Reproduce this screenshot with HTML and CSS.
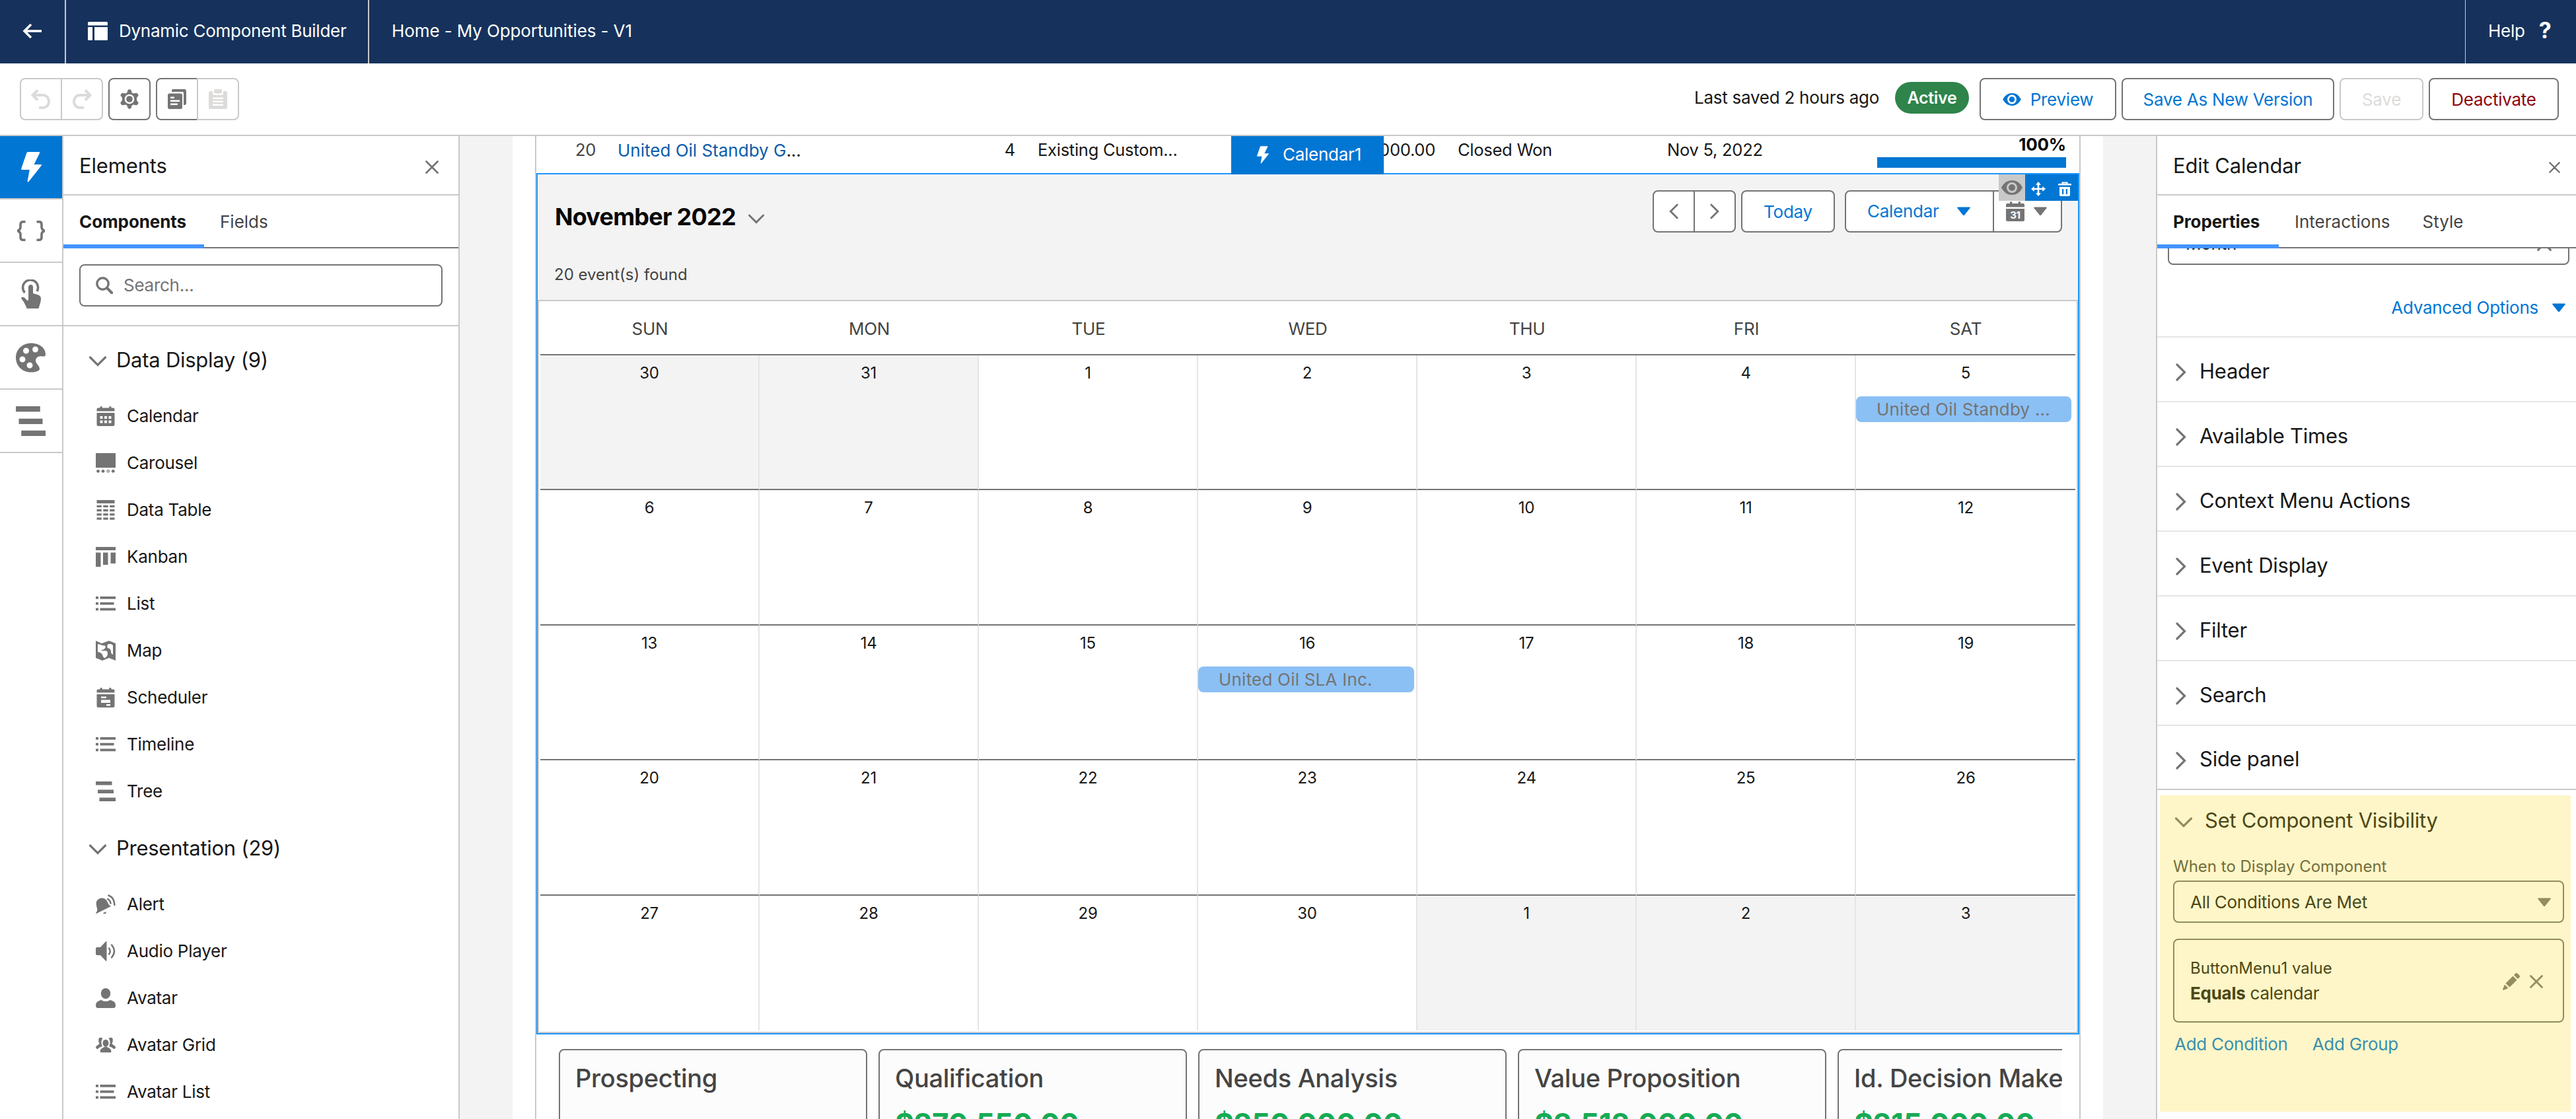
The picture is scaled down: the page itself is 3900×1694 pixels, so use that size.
FILE: index.html
```html
<!DOCTYPE html>
<html lang="en">
  <head>
    <meta charset="UTF-8" />
    <meta name="viewport" content="width=device-width, initial-scale=1.0" />
    <title>Dynamic Component Builder</title>
    <link rel="stylesheet" href="styles.css">
  </head>
  <body>
    <!-- icon sprite -->
    <svg class="sprite" xmlns="http://www.w3.org/2000/svg">
      <symbol id="i-back" viewBox="0 0 30 24"><path d="M14 2 4 12l10 10M4 12h26" fill="none" stroke="currentColor" stroke-width="3.6"/></symbol>
      <symbol id="i-layout" viewBox="0 0 30 28"><path d="M1.500 0h27a1.500 1.500 0 0 1 1.500 1.500V5.500H0v-4A1.500 1.500 0 0 1 1.500 0zM0 8h7v20H1.500A1.500 1.500 0 0 1 0 26.500zM10 8h20v18.500a1.500 1.500 0 0 1-1.500 1.500H10z"/></symbol>
      <symbol id="i-undo" viewBox="0 0 30 30"><path d="M10 1.500 2.500 9l7.500 7.500M3 9h15a9 9 0 0 1 9 9.500 9 9 0 0 1-9 9.500h-6" fill="none" stroke="currentColor" stroke-width="4"/></symbol>
      <symbol id="i-redo" viewBox="0 0 30 30"><path d="M20 1.500 27.500 9l-7.500 7.500M27 9H12a9 9 0 0 0-9 9.500A9 9 0 0 0 12 28h6" fill="none" stroke="currentColor" stroke-width="4"/></symbol>
      <symbol id="i-gear" viewBox="0 0 28 30"><path fill-rule="evenodd" d="M11.500 1.500Q14-1 16.500 1.500l1.300 4 2 1.100 4.200-.9q3 .3 3.600 4.100L25 13v4l2.600 3.200q-.6 3.800-3.600 4.100l-4.200-.9-2 1.100-1.300 4Q14 31 11.500 28.500l-1.300-4-2-1.100-4.200.9Q1 24 .4 20.200L3 17v-4L.4 9.800Q1 6 4 5.700l4.200.9 2-1.100zM14 7.700a7.300 7.300 0 1 0 0 14.600 7.300 7.300 0 0 0 0-14.600z"/><circle cx="14" cy="15" r="4.800"/></symbol>
      <symbol id="i-copy" viewBox="0 0 28 30"><path d="M8 0h17a3 3 0 0 1 3 3v18a3 3 0 0 1-3 3h-1V6a2 2 0 0 0-2-2H6V2a2 2 0 0 1 2-2z"/><path fill-rule="evenodd" d="M2.500 6.500h17A2.500 2.500 0 0 1 22 9v18.500a2.500 2.500 0 0 1-2.500 2.500h-17A2.500 2.500 0 0 1 0 27.500V9a2.500 2.500 0 0 1 2.500-2.500zM4 11.500V14h6v-2.500zM4 16.500V19h14v-2.500zM4 21.500V24h11v-2.500z"/></symbol>
      <symbol id="i-paste" viewBox="0 0 28 30"><rect x="8" y="0" width="12" height="6.500" rx="2"/><path fill-rule="evenodd" d="M2.500 3H6v3q0 3 3 3h10q3 0 3-3V3h3.500A2.500 2.500 0 0 1 28 5.500v22a2.500 2.500 0 0 1-2.500 2.500h-23A2.500 2.500 0 0 1 0 27.500v-22A2.500 2.500 0 0 1 2.500 3zM6 12.500V15h16v-2.500zM6 17.500V20h16v-2.500zM6 22.500V25h16v-2.500z"/></symbol>
      <symbol id="i-eye" viewBox="0 0 32 22"><path fill-rule="evenodd" d="M.5 10Q6 0 16 0t15.500 10q.7 1 0 2Q26 22 16 22T.5 12q-.7-1 0-2zM16 3a8 8 0 1 0 0 16 8 8 0 0 0 0-16z"/><circle cx="16" cy="11" r="5"/></symbol>
      <symbol id="i-bolt" viewBox="0 0 31 46"><path d="M10 0h17.500l.8 1.300L19.500 19h11l.5 1.300L11 45.500l-1.500-.5 3.300-18H.7L0 25.700 8.500 1z"/></symbol>
      <symbol id="i-braces" viewBox="0 0 42 31"><path d="M12.500 1.700H9q-4 0-4 4v4q0 4-4.500 5.800Q5 17 5 21v4.300q0 4 4 4h3.500M29.500 1.700H33q4 0 4 4v4q0 4 4.500 5.800Q37 17 37 21v4.300q0 4-4 4h-3.500" fill="none" stroke="currentColor" stroke-width="3.600"/></symbol>
      <symbol id="i-touch" viewBox="0 0 30 44"><path d="M5.500 20A11.500 11.500 0 1 1 24 18" fill="none" stroke="currentColor" stroke-width="3.500"/><path d="M11 11.500a3.500 3.500 0 0 1 7 0V21l8 2.500q4 1.500 4 5.500 0 4-1.500 8l-2 7H8.500L7 40Q5 35 1 30q-1.500-2 0-3 3-1 5.500 2 1.500 2 3 3 1.500 0 1.500-2z"/></symbol>
      <symbol id="i-palette" viewBox="0 0 45 44"><path fill-rule="evenodd" d="M23 0C10 0 0 9.500 0 22s10 22 22.500 22c3.500 0 9-.5 12-2.500 2.500-2 1.500-4.500-.5-7.500-3-4-5.500-7-3-11 1.500-3 5-3.500 9-3 3.500.5 5-.5 5-3C45 6 34 0 23 0zM15.500 7a4.500 4.500 0 1 0 0 9 4.500 4.500 0 0 0 0-9zm14-2a4.500 4.500 0 1 0 0 9 4.500 4.500 0 0 0 0-9zM10 20a4.500 4.500 0 1 0 0 9 4.500 4.500 0 0 0 0-9zm11 9a4.500 4.500 0 1 0 0 9 4.500 4.500 0 0 0 0-9z"/></symbol>
      <symbol id="i-tree" viewBox="0 0 30 30"><path d="M0 0h24.500v5.500H0zM3 12.500h24V18H3zM5.500 24.500H30V30H5.500z"/></symbol>
      <symbol id="i-search" viewBox="0 0 26 26"><circle cx="10.500" cy="10.500" r="8.700" fill="none" stroke="currentColor" stroke-width="3.400"/><path d="m17 17 7.500 7.500" stroke="currentColor" stroke-width="4" stroke-linecap="round"/></symbol>
      <symbol id="i-close" viewBox="0 0 20 20"><path d="m1.500 1.500 17 17m0-17-17 17" fill="none" stroke="currentColor" stroke-width="2.800" stroke-linecap="round"/></symbol>
      <symbol id="i-down" viewBox="0 0 26 16"><path d="m1.500 2 11.500 11.500L24.500 2" fill="none" stroke="currentColor" stroke-width="3.200" stroke-linecap="round"/></symbol>
      <symbol id="i-right" viewBox="0 0 16 26"><path d="m2 1.500 11.500 11.500L2 24.500" fill="none" stroke="currentColor" stroke-width="3.200" stroke-linecap="round"/></symbol>
      <symbol id="i-tri" viewBox="0 0 20 13"><path d="M1 0h18l1 1-9.200 11.500h-1.600L0 1z"/></symbol>
      <symbol id="i-calendar" viewBox="0 0 30 30"><path d="M3.500 2.500h3V1q1.700-2 3.300 0v1.500h10.400V1q1.700-2 3.300 0v1.500h3q2 0 2 2v3h-27v-3q0-2 2-2z"/><path fill-rule="evenodd" d="M1.500 10h27v17.500a2.500 2.500 0 0 1-2.500 2.500H4a2.500 2.500 0 0 1-2.500-2.500zM6.500 15v4h4v-4zm6.500 0v4h4v-4zm6.500 0v4h4v-4zm-13 6.500v4h4v-4zm6.500 0v4h4v-4zm6.500 0v4h4v-4z"/></symbol>
      <symbol id="i-carousel" viewBox="0 0 30 30"><path d="M0 0h30v22H0z"/><circle cx="3.500" cy="27.300" r="2.400"/><circle cx="11" cy="27.300" r="2.400"/><circle cx="18.700" cy="27.300" r="1.700" fill="none" stroke="currentColor" stroke-width="1.200"/><circle cx="26.300" cy="27.300" r="2.400"/></symbol>
      <symbol id="i-table" viewBox="0 0 30 30"><path d="M1.500 0h27v5h-27zM1.500 8h7.300v3H1.500zM11.300 8h7.400v3h-7.400zM21.200 8h7.300v3h-7.300zM1.500 14h7.300v3.300H1.500zM11.300 14h7.400v3.300h-7.400zM21.200 14h7.300v3.300h-7.300zM1.500 20.300h7.300v3.200H1.500zM11.300 20.300h7.400v3.200h-7.400zM21.200 20.300h7.300v3.200h-7.300zM1.500 26.500h7.300v3.200H1.500zM11.300 26.500h7.400v3.200h-7.400zM21.200 26.500h7.300v3.200h-7.300z"/></symbol>
      <symbol id="i-kanban" viewBox="0 0 30 30"><path d="M0 0h30v5H0zM0 8.500h7.500V30H0zM11 8.500h7.500V27H11zM22.500 8.500H30V25h-7.500z"/></symbol>
      <symbol id="i-list" viewBox="0 0 30 30"><path d="M0 4h4v3.800H0zM6.500 4H30v3.800H6.500zM0 12.700h4v3.800H0zM6.500 12.700h21v3.800h-21zM0 21.500h4v3.800H0zM6.500 21.500H30v3.800H6.500z"/></symbol>
      <symbol id="i-map" viewBox="0 0 30 30"><path fill-rule="evenodd" d="M0 0l9 4 11-4 10 4v26l-10-4-10 4-10-4zM3 5v12q4 0 7 4 1 5 4 5 4-2 4-7 0-4-4-4-4 1-6-1 5 0 6-3 2-2-1-4-3 1-5-1zM19 5q4-1 7 2v14q-3-1-3-5 0-4-5-5-2-4 1-6z"/></symbol>
      <symbol id="i-scheduler" viewBox="0 0 30 30"><path d="M3.500 2.500h3V1q1.700-2 3.300 0v1.500h10.400V1q1.700-2 3.300 0v1.500h3q2 0 2 2v3h-27v-3q0-2 2-2z"/><path fill-rule="evenodd" d="M1.500 10h27v17.500a2.500 2.500 0 0 1-2.500 2.500H4a2.500 2.500 0 0 1-2.500-2.500zM8 13.500V16h8v-2.500zm0 5V23h14v-4.500zm8 6.500v2.500h6V25z"/></symbol>
      <symbol id="i-alert" viewBox="0 0 30 30"><path d="M1 11Q3 6 9 5.500q6 0 8.500 5.500 2.500 6.500 5.500 6.500-.5 1-3 2L2 28.500q-2.500 1-2 0Q3 25 2 21 0 15 1 11zM11 28l5-2q0 3-2 3.500-2 .5-3-1.500z"/><path d="M18 7q4 2 4.500 6.500M19.500 1.500Q28 5 28.500 16" fill="none" stroke="currentColor" stroke-width="2.500" stroke-linecap="round"/></symbol>
      <symbol id="i-audio" viewBox="0 0 30 30"><path d="M2 9h5L15 .5q1.500-1 1.500.5v28q0 1.500-1.500.5L7 21H2q-2 0-2-2v-8q0-2 2-2z"/><path d="M20 10.500q3.500 4.500 0 9M24 5.500q8 9.500 0 19" fill="none" stroke="currentColor" stroke-width="2.400" stroke-linecap="round"/></symbol>
      <symbol id="i-avatar" viewBox="0 0 30 30"><ellipse cx="15" cy="8" rx="7.200" ry="8"/><path d="M0 26q0-5 4-6.500l4-1.800q3.500 2.300 7 2.300t7-2.300l4 1.800Q30 21 30 26q0 4-3 4H3q-3 0-3-4z"/></symbol>
      <symbol id="i-group" viewBox="0 0 32 30"><ellipse cx="16" cy="12" rx="4.800" ry="5.800"/><path d="M7 25q0-3 2.500-4.500L14 18h4l4.500 2.500Q25 22 25 25t-2 2H9q-2 0-2-2zM4.500 6Q5 2 9 3.300l2.500.7Q8.500 7 9 12q.5 3 1.500 5L6 19l-3 2.500q-3-.5-3-3 0-1.500 2.500-3L6 13Q4 10 4.500 6zM27.500 6Q27 2 23 3.300L20.500 4q3 3 2.500 8-.5 3-1.500 5l4.500 2 3 2.500q3-.5 3-3 0-1.500-2.500-3L26 13q2-3 1.500-7z"/></symbol>
      <symbol id="i-event" viewBox="0 0 28 30"><path d="M2 3h4V1q1.700-2 3.300 0v2h9.400V1q1.700-2 3.300 0v2h4q2 0 2 2v3.500H0V5q0-2 2-2zM0 11h28v16.500a2.500 2.500 0 0 1-2.500 2.500h-23A2.500 2.500 0 0 1 0 27.500z"/></symbol>
      <symbol id="i-move" viewBox="0 0 22 22"><path d="M11 3v16M3 11h16" stroke="currentColor" stroke-width="2.600"/><path d="m11 0 4 4.700H7zM11 22l4-4.700H7zM0 11l4.700-4v8zM22 11l-4.700-4v8z"/></symbol>
      <symbol id="i-trash" viewBox="0 0 20 22"><path d="M6.500 3V1.500h7V3" fill="none" stroke="currentColor" stroke-width="2"/><path fill-rule="evenodd" d="M1 3h18q1 0 1 1v1.500H0V4q0-1 1-1zM2 8h16v12a2 2 0 0 1-2 2H4a2 2 0 0 1-2-2zM6 11v8h2.200v-8zm5.800 0v8H14v-8z"/></symbol>
      <symbol id="i-edit" viewBox="0 0 26 26"><path d="m4.500 15.500 6 6L21.500 10.500l-6-6zM17 3l6 6 2.200-2.200q1.600-1.700 0-3.200L22.400.800q-1.600-1.500-3.200 0zM3 17.500l5.500 5.500-7 2.800q-1.500.5-1.300-1.300z"/></symbol>
    </svg>

    <header class="topbar">
      <a class="topbar-back"><svg class="icon-back"><use href="#i-back"/></svg></a>
      <div class="topbar-app"><svg class="icon-layout"><use href="#i-layout"/></svg><span>Dynamic Component Builder</span></div>
      <div class="topbar-title">Home - My Opportunities - V1</div>
      <div class="topbar-help">Help <b>?</b></div>
    </header>

    <div class="toolbar">
      <div class="btn-group">
        <button class="icon-btn disabled"><svg class="icon-30"><use href="#i-undo"/></svg></button>
        <button class="icon-btn disabled"><svg class="icon-30"><use href="#i-redo"/></svg></button>
      </div>
      <div class="btn-group">
        <button class="icon-btn single"><svg class="icon-tool"><use href="#i-gear"/></svg></button>
      </div>
      <div class="btn-group">
        <button class="icon-btn"><svg class="icon-tool"><use href="#i-copy"/></svg></button>
        <button class="icon-btn disabled"><svg class="icon-tool"><use href="#i-paste"/></svg></button>
      </div>
      <div class="toolbar-actions">
        <span class="saved">Last saved 2 hours ago</span>
        <span class="badge">Active</span>
        <button class="btn btn-preview"><svg class="icon-preview"><use href="#i-eye"/></svg>Preview</button>
        <button class="btn btn-version">Save As New Version</button>
        <button class="btn btn-save">Save</button>
        <button class="btn btn-deactivate">Deactivate</button>
      </div>
    </div>

    <div class="workspace">
      <nav class="rail">
        <a class="rail-item active"><svg class="icon-bolt"><use href="#i-bolt"/></svg></a>
        <a class="rail-item"><svg class="icon-braces"><use href="#i-braces"/></svg></a>
        <a class="rail-item"><svg class="icon-touch"><use href="#i-touch"/></svg></a>
        <a class="rail-item"><svg class="icon-palette"><use href="#i-palette"/></svg></a>
        <a class="rail-item"><svg class="icon-palette"><use href="#i-tree"/></svg></a>
      </nav>

      <aside class="elements">
        <div class="panel-head"><h2>Elements</h2><svg class="icon-20"><use href="#i-close"/></svg></div>
        <div class="tabs">
          <span class="tab selected">Components</span>
          <span class="tab">Fields</span>
        </div>
        <div class="search-wrap">
          <div class="search"><svg class="icon-search"><use href="#i-search"/></svg><span>Search...</span></div>
        </div>
        <h3 class="group-title"><svg class="icon-down"><use href="#i-down"/></svg>Data Display (9)</h3>
        <ul class="element-list">
          <li><svg class="icon-30"><use href="#i-calendar"/></svg>Calendar</li>
          <li><svg class="icon-30"><use href="#i-carousel"/></svg>Carousel</li>
          <li><svg class="icon-30"><use href="#i-table"/></svg>Data Table</li>
          <li><svg class="icon-30"><use href="#i-kanban"/></svg>Kanban</li>
          <li><svg class="icon-30"><use href="#i-list"/></svg>List</li>
          <li><svg class="icon-30"><use href="#i-map"/></svg>Map</li>
          <li><svg class="icon-30"><use href="#i-scheduler"/></svg>Scheduler</li>
          <li><svg class="icon-30"><use href="#i-list"/></svg>Timeline</li>
          <li><svg class="icon-30"><use href="#i-tree"/></svg>Tree</li>
        </ul>
        <h3 class="group-title"><svg class="icon-down"><use href="#i-down"/></svg>Presentation (29)</h3>
        <ul class="element-list">
          <li><svg class="icon-30"><use href="#i-alert"/></svg>Alert</li>
          <li><svg class="icon-30"><use href="#i-audio"/></svg>Audio Player</li>
          <li><svg class="icon-30"><use href="#i-avatar"/></svg>Avatar</li>
          <li><svg class="icon-30"><use href="#i-group"/></svg>Avatar Grid</li>
          <li><svg class="icon-30"><use href="#i-list"/></svg>Avatar List</li>
        </ul>
      </aside>

      <main class="canvas">
        <div class="page">
          <div class="content">
            <div class="opp-row">
              <span class="opp-index">20</span>
              <span class="opp-name"><a>United Oil Standby G</a>...</span>
              <span class="right">4</span>
              <span class="opp-type">Existing Custom...</span>
              <span class="right">$120,000.00</span>
              <span class="opp-stage">Closed Won</span>
              <span>Nov 5, 2022</span>
              <div class="progress"><b>100%</b><div class="progress-bar"></div></div>
            </div>

            <section class="calendar">
              <div class="component-tag"><svg class="icon-tag"><use href="#i-bolt"/></svg>Calendar1</div>
              <div class="component-tools">
                <span class="tool-eye"><svg class="icon-preview"><use href="#i-eye"/></svg></span>
                <span><svg class="icon-move"><use href="#i-move"/></svg></span>
                <span><svg class="icon-trash"><use href="#i-trash"/></svg></span>
              </div>
              <div class="cal-head">
                <div class="cal-bar">
                  <h1>November 2022<svg class="icon-month"><use href="#i-down"/></svg></h1>
                  <div class="cal-actions">
                    <div class="cal-group">
                      <button class="nav-btn"><svg class="icon-prev"><use href="#i-right"/></svg></button>
                      <button class="nav-btn"><svg class="icon-next"><use href="#i-right"/></svg></button>
                    </div>
                    <button class="btn btn-today">Today</button>
                    <div class="cal-group">
                      <button class="view-btn">Calendar<svg class="icon-tri"><use href="#i-tri"/></svg></button>
                      <button class="range-btn"><span class="event-icon"><svg class="icon-tool"><use href="#i-event"/></svg><b>31</b></span><svg class="icon-tri"><use href="#i-tri"/></svg></button>
                    </div>
                  </div>
                </div>
                <p>20 event(s) found</p>
              </div>
              <div class="cal-body">
                <div class="weekdays">
                  <span>SUN</span><span>MON</span><span>TUE</span><span>WED</span><span>THU</span><span>FRI</span><span>SAT</span>
                </div>
                <div class="weeks">
                  <div class="day out">30</div>
                  <div class="day out">31</div>
                  <div class="day">1</div>
                  <div class="day">2</div>
                  <div class="day">3</div>
                  <div class="day">4</div>
                  <div class="day">5<span class="event">United Oil Standby ...</span></div>
                  <div class="day">6</div>
                  <div class="day">7</div>
                  <div class="day">8</div>
                  <div class="day">9</div>
                  <div class="day">10</div>
                  <div class="day">11</div>
                  <div class="day">12</div>
                  <div class="day">13</div>
                  <div class="day">14</div>
                  <div class="day">15</div>
                  <div class="day">16<span class="event">United Oil SLA Inc.</span></div>
                  <div class="day">17</div>
                  <div class="day">18</div>
                  <div class="day">19</div>
                  <div class="day">20</div>
                  <div class="day">21</div>
                  <div class="day">22</div>
                  <div class="day">23</div>
                  <div class="day">24</div>
                  <div class="day">25</div>
                  <div class="day">26</div>
                  <div class="day">27</div>
                  <div class="day">28</div>
                  <div class="day">29</div>
                  <div class="day">30</div>
                  <div class="day out">1</div>
                  <div class="day out">2</div>
                  <div class="day out">3</div>
                </div>
              </div>
            </section>

            <section class="stages">
              <div class="stage"><h4>Prospecting</h4></div>
              <div class="stage"><h4>Qualification</h4><strong>$270,550.00</strong></div>
              <div class="stage"><h4>Needs Analysis</h4><strong>$250,000.00</strong></div>
              <div class="stage"><h4>Value Proposition</h4><strong>$3,512,000.00</strong></div>
              <div class="stage"><h4>Id. Decision Makers</h4><strong>$215,000.00</strong></div>
            </section>
          </div>
        </div>
      </main>

      <aside class="props">
        <div class="panel-head"><h2>Edit Calendar</h2><svg class="icon-17"><use href="#i-close"/></svg></div>
        <div class="tabs">
          <span class="tab selected">Properties</span>
          <span class="tab">Interactions</span>
          <span class="tab">Style</span>
        </div>
        <div class="props-scroll">
          <div class="month-field"><span>Month</span><svg class="icon-clear"><use href="#i-close"/></svg></div>
        </div>
        <div class="advanced">Advanced Options<svg class="icon-tri"><use href="#i-tri"/></svg></div>
        <div class="section"><svg class="icon-right"><use href="#i-right"/></svg>Header</div>
        <div class="section"><svg class="icon-right"><use href="#i-right"/></svg>Available Times</div>
        <div class="section"><svg class="icon-right"><use href="#i-right"/></svg>Context Menu Actions</div>
        <div class="section"><svg class="icon-right"><use href="#i-right"/></svg>Event Display</div>
        <div class="section"><svg class="icon-right"><use href="#i-right"/></svg>Filter</div>
        <div class="section"><svg class="icon-right"><use href="#i-right"/></svg>Search</div>
        <div class="section"><svg class="icon-right"><use href="#i-right"/></svg>Side panel</div>
        <div class="visibility">
          <h3><svg class="icon-down"><use href="#i-down"/></svg>Set Component Visibility</h3>
          <label>When to Display Component</label>
          <div class="select">All Conditions Are Met<svg class="icon-tri"><use href="#i-tri"/></svg></div>
          <div class="condition">
            <div class="condition-text">
              <span class="condition-source">ButtonMenu1 value</span>
              <span><b>Equals</b> calendar</span>
            </div>
            <svg class="icon-edit"><use href="#i-edit"/></svg>
            <svg class="icon-20"><use href="#i-close"/></svg>
          </div>
          <div class="links"><a>Add Condition</a><a>Add Group</a></div>
        </div>
      </aside>
    </div>
  </body>
</html>
```
FILE: styles.css
```css
* {
  box-sizing: border-box;
  margin: 0;
  padding: 0;
}
body {
  width: 3900px;
  height: 1694px;
  overflow: hidden;
  display: flex;
  flex-direction: column;
  font-family: Inter, "Liberation Sans", sans-serif;
  font-size: 26px;
  line-height: 1.2;
  color: #181818;
  background: #fff;
  letter-spacing: -0.01em;
}
h1,
h2,
h3,
h4 {
  font-weight: 400;
}
ul {
  list-style: none;
}
button {
  font: inherit;
  letter-spacing: inherit;
  background: #fff;
  border: 2px solid #747474;
  color: #747474;
}
svg {
  display: block;
  flex: none;
  fill: currentColor;
}
.sprite {
  position: absolute;
  width: 0;
  height: 0;
}

/* icon sizes */
.icon-back { width: 30px; height: 24px; }
.icon-layout { width: 30px; height: 28px; }
.icon-30 { width: 30px; height: 30px; }
.icon-tool { width: 28px; height: 30px; }
.icon-preview { width: 32px; height: 22px; }
.icon-bolt { width: 31px; height: 46px; }
.icon-braces { width: 42px; height: 31px; }
.icon-touch { width: 30px; height: 44px; }
.icon-palette { width: 45px; height: 45px; }
.icon-20 { width: 20px; height: 20px; color: #747474; }
.icon-17 { width: 17px; height: 17px; color: #747474; }
.icon-search { width: 26px; height: 26px; }
.icon-down { width: 26px; height: 16px; color: #747474; }
.icon-month { width: 24px; height: 15px; color: #747474; }
.icon-right { width: 16px; height: 27px; color: #747474; }
.icon-prev { width: 14px; height: 24px; transform: scaleX(-1); }
.icon-next { width: 14px; height: 24px; }
.icon-tri { width: 20px; height: 14px; }
.icon-tag { width: 18px; height: 27px; }
.icon-move { width: 22px; height: 22px; }
.icon-trash { width: 20px; height: 22px; }
.icon-edit { width: 26px; height: 26px; }
.icon-clear { width: 22px; height: 22px; }

/* top bar */
.topbar {
  display: flex;
  height: 96px;
  background: #16325c;
  color: #fff;
}
.topbar > * {
  display: flex;
  align-items: center;
  padding-bottom: 3px;
}
.topbar-back {
  width: 100px;
  padding-left: 33px;
  border-right: 2px solid #c9c9c9;
}
.topbar-app {
  width: 459px;
  padding-left: 33px;
  gap: 17px;
  border-right: 2px solid #c9c9c9;
}
.topbar-title {
  padding-left: 34px;
  letter-spacing: -0.004em;
}
.topbar-help {
  width: 168px;
  margin-left: auto;
  padding-left: 34px;
  gap: 21px;
  border-left: 1px solid #c9c9c9;
}
.topbar-help b {
  font-size: 34px;
}

/* toolbar */
.toolbar {
  display: flex;
  align-items: center;
  height: 110px;
  padding: 0 26px 0 30px;
  gap: 8px;
  border-bottom: 2px solid #c9c9c9;
}
.btn-group {
  display: flex;
}
.icon-btn {
  display: flex;
  align-items: center;
  justify-content: center;
  width: 64px;
  height: 64px;
}
.icon-btn:first-child {
  border-radius: 8px 0 0 8px;
}
.icon-btn:last-child {
  border-radius: 0 8px 8px 0;
  margin-left: -2px;
}
.icon-btn.single {
  border-radius: 8px;
  margin-left: 0;
}
.icon-btn.disabled {
  border-color: #c9c9c9;
  color: #dddbda;
}
.toolbar-actions {
  display: flex;
  align-items: center;
  margin-left: auto;
}
.saved {
  width: 304px;
  margin-top: -4px;
}
.badge {
  display: flex;
  align-items: center;
  justify-content: center;
  width: 112px;
  height: 48px;
  margin: -4px 16px 0 0;
  border-radius: 24px;
  background: #2e844a;
  color: #fff;
  font-weight: 600;
  font-size: 25px;
}
.btn {
  display: flex;
  align-items: center;
  justify-content: center;
  height: 64px;
  padding-top: 1px;
  border-radius: 8px;
  color: #0176d3;
}
.btn-preview {
  width: 207px;
  gap: 14px;
  margin-right: 8px;
}
.btn-preview .icon-preview {
  width: 28px;
  height: 19px;
}
.btn-version {
  width: 322px;
  margin-right: 8px;
}
.btn-save {
  width: 127px;
  margin-right: 8px;
  border-color: #c9c9c9;
  color: #dddbda;
}
.btn-deactivate {
  width: 197px;
  color: #8e030f;
}

.workspace {
  display: flex;
  flex: 1;
  min-height: 0;
  overflow: hidden;
}

/* left rail */
.rail {
  width: 96px;
  border-right: 2px solid #c9c9c9;
}
.rail-item {
  display: flex;
  align-items: center;
  justify-content: center;
  height: 96px;
  border-bottom: 2px solid #c9c9c9;
  color: #747474;
}
.rail-item.active {
  background: #0176d3;
  color: #fff;
}
.rail-item .icon-palette {
  margin-right: 1px;
}

/* panels */
.elements {
  width: 600px;
  overflow: hidden;
  border-right: 2px solid #c9c9c9;
}
.panel-head {
  display: flex;
  align-items: center;
  justify-content: space-between;
  height: 90px;
  padding: 0 30px 0 24px;
  border-bottom: 2px solid #c9c9c9;
}
.panel-head svg {
  margin-top: 6px;
}
.panel-head h2 {
  padding-top: 1px;
  font-size: 31px;
  letter-spacing: -0.005em;
}
.tabs {
  display: flex;
  height: 80px;
  box-shadow: inset 0 -2px #747474;
}
.tab {
  display: flex;
  align-items: center;
  padding: 0 24px;
  color: #444;
  letter-spacing: 0;
}
.tab.selected {
  color: #181818;
  font-weight: 700;
  letter-spacing: -0.004em;
  box-shadow: inset 0 -6px #4294ff;
}
.elements .tab.selected {
  width: 213px;
}
.search-wrap {
  height: 118px;
  padding: 24px 24px 0;
  border-bottom: 2px solid #c9c9c9;
}
.search {
  display: flex;
  align-items: center;
  height: 64px;
  padding-left: 23px;
  gap: 16px;
  border: 2px solid #747474;
  border-radius: 8px;
  color: #747474;
}
.group-title {
  display: flex;
  align-items: center;
  gap: 15px;
  height: 100px;
  padding: 2px 0 0 39px;
  font-size: 31px;
}
.group-title .icon-down {
  margin-top: 4px;
}
.element-list li {
  display: flex;
  align-items: center;
  gap: 17px;
  height: 71px;
  padding-left: 49px;
}
.element-list svg {
  width: 30px;
  color: #747474;
}

/* canvas */
.canvas {
  flex: 1;
  min-width: 0;
  padding: 0 80px;
  background: #f3f3f3;
}
.page {
  height: 100%;
  padding: 0 34px;
  background: #fff;
}
.content {
  height: 100%;
  overflow: hidden;
  border: solid #c9c9c9;
  border-width: 0 2px;
}
.opp-row {
  display: grid;
  grid-template-columns: 64px 500px 102px 302px 334px 351px 318px 286px;
  height: 56px;
  padding-left: 59px;
  align-items: center;
  font-size: 25.5px;
  white-space: nowrap;
}
.opp-row > span {
  margin-bottom: 13px;
}
.opp-row .opp-name {
  font-size: 26px;
  letter-spacing: 0;
}
.opp-row a {
  color: #0b5cab;
}
.opp-index {
  color: #444;
}
.right {
  text-align: right;
}
.opp-type,
.opp-stage {
  padding-left: 34px;
}
.progress {
  align-self: start;
  text-align: right;
  line-height: 25px;
}
.progress b {
  display: block;
  height: 32px;
  font-size: 26px;
  color: #080707;
}
.progress-bar {
  height: 16px;
  background: #0176d3;
}

/* selected calendar component */
.calendar {
  position: relative;
  height: 1304px;
  border: 2px solid #1b96ff;
  display: flex;
  flex-direction: column;
}
.component-tag {
  position: absolute;
  top: -58px;
  left: 1050px;
  width: 231px;
  height: 58px;
  display: flex;
  align-items: center;
  padding: 0 0 2px 39px;
  gap: 21px;
  background: #0176d3;
  color: #fff;
}
.component-tools {
  position: absolute;
  top: 0;
  right: 0;
  display: flex;
  color: #fff;
}
.component-tools span {
  display: flex;
  align-items: center;
  justify-content: center;
  width: 40px;
  height: 40px;
  padding-top: 4px;
  background: #0176d3;
}
.component-tools .tool-eye {
  padding-top: 0;
  background: #c9c9c9;
  color: #747474;
}
.cal-head {
  height: 192px;
  padding: 24px 24px 0 25px;
  border-bottom: 2px solid #c9c9c9;
  background: #f3f3f3;
}
.cal-bar {
  display: flex;
  justify-content: space-between;
}
.cal-bar h1 {
  display: flex;
  align-items: center;
  gap: 19px;
  padding: 18px 0 0 1px;
  height: 64px;
  font-size: 36px;
  font-weight: 700;
  letter-spacing: -0.021em;
  color: #080707;
}
.cal-bar h1 svg {
  margin-top: 5px;
}
.cal-head p {
  margin-top: 50px;
  font-size: 24px;
  letter-spacing: 0;
  color: #444;
}
.cal-actions {
  display: flex;
}
.cal-group {
  display: flex;
}
.cal-group button {
  display: flex;
  align-items: center;
  height: 64px;
}
.cal-group button:first-child {
  border-radius: 8px 0 0 8px;
}
.cal-group button:last-child {
  border-radius: 0 8px 8px 0;
  margin-left: -2px;
}
.nav-btn {
  width: 64px;
  justify-content: center;
}
.btn-today {
  width: 142px;
  margin: 0 15px 0 8px;
}
.view-btn {
  width: 226px;
  padding-left: 32px;
  gap: 27px;
  color: #0176d3;
}
.range-btn {
  width: 105px;
  padding-left: 18px;
  gap: 14px;
}
.event-icon {
  position: relative;
}
.event-icon b {
  position: absolute;
  left: 0;
  right: 0;
  top: 12px;
  font-size: 15px;
  text-align: center;
  color: #fff;
}
.cal-body {
  flex: 1;
  display: flex;
  flex-direction: column;
  padding: 0 2px 2px;
  border: solid #c9c9c9;
  border-width: 0 2px 2px;
}
.weekdays {
  display: grid;
  grid-template-columns: repeat(7, 1fr);
  height: 82px;
  padding-top: 4px;
  align-items: center;
  text-align: center;
  color: #444;
  border-bottom: 2px solid #747474;
}
.weeks {
  flex: 1;
  display: grid;
  grid-template-columns: repeat(7, 1fr);
  grid-template-rows: repeat(5, 1fr);
}
.day {
  padding-top: 13px;
  font-size: 24px;
  text-align: center;
  border-right: 2px solid #e5e5e5;
  border-bottom: 2px solid #747474;
}
.day:nth-child(7n) {
  border-right: 0;
}
.day:nth-child(n + 29) {
  border-bottom: 0;
}
.day.out {
  background: #f3f3f3;
}
.event {
  display: block;
  height: 39px;
  margin: 20px 3px 0 0;
  padding-left: 31px;
  border-radius: 8px;
  background: #8bc0f5;
  color: #747474;
  font-size: 26px;
  line-height: 40px;
  letter-spacing: 0.008em;
  text-align: left;
}
.day:nth-child(7n) .event {
  margin-right: 6px;
}

/* pipeline stages */
.stages {
  display: flex;
  gap: 17px;
  margin: 22px 26px 0 34px;
  overflow: hidden;
}
.stage {
  flex: none;
  width: 467px;
  height: 300px;
  padding: 17px 23px;
  border: 2px solid #747474;
  border-radius: 8px;
  background: #fcfcfc;
  white-space: nowrap;
}
.stage h4 {
  font-size: 38px;
  line-height: 50px;
  font-weight: 500;
  letter-spacing: -0.008em;
  color: #444;
}
.stage strong {
  display: block;
  margin-top: 17px;
  font-size: 44px;
  line-height: 54px;
  color: #16ab54;
}

/* properties panel */
.props {
  width: 636px;
  border-left: 2px solid #c9c9c9;
}
.props .panel-head {
  padding-right: 24px;
}
.props .tab:last-child {
  padding-left: 25px;
}
.props .tab.selected {
  width: 184px;
}
.props-scroll {
  display: flex;
  align-items: flex-end;
  height: 25px;
  padding: 0 10px 0 16px;
  overflow: hidden;
}
.month-field {
  display: flex;
  align-items: center;
  justify-content: space-between;
  flex: 1;
  height: 64px;
  padding: 0 25px;
  border: 2px solid #747474;
  border-radius: 8px;
}
.month-field svg {
  color: #747474;
}
.advanced {
  display: flex;
  align-items: center;
  justify-content: flex-end;
  gap: 21px;
  height: 110px;
  padding: 22px 16px 0 0;
  color: #0176d3;
  border-bottom: 2px solid #e5e5e5;
}
.section {
  display: flex;
  align-items: center;
  gap: 20px;
  height: 98px;
  padding: 5px 0 0 28px;
  font-size: 31px;
  border-bottom: 2px solid #e5e5e5;
}
.section .icon-right {
  margin-top: 4px;
}
.section:nth-last-child(2) {
  height: 97px;
  border-bottom-color: #c9c9c9;
}
.visibility {
  height: 479px;
  margin: 8px 8px 0 4px;
  padding: 0 10px 0 20px;
  background: #fef6c8;
  color: #4c4817;
}
.visibility svg {
  color: #938c5c;
}
.visibility h3 {
  display: flex;
  align-items: center;
  gap: 19px;
  height: 76px;
  padding-left: 3px;
  font-size: 31px;
}
.visibility h3 svg {
  margin-top: 6px;
}
.visibility label {
  display: block;
  height: 53px;
  padding-top: 18px;
  font-size: 24px;
  letter-spacing: 0;
  color: #746e3b;
}
.select {
  display: flex;
  align-items: center;
  justify-content: space-between;
  height: 64px;
  padding: 1px 18px 0 24px;
  border: 2px solid #938c5c;
  border-radius: 8px;
}
.condition {
  display: flex;
  align-items: center;
  height: 127px;
  margin-top: 24px;
  padding: 2px 30px 0 24px;
  gap: 15px;
  border: 2px solid #938c5c;
  border-radius: 8px;
}
.condition-text {
  display: flex;
  flex-direction: column;
  gap: 7px;
  margin-right: auto;
}
.condition-source {
  font-size: 24px;
  letter-spacing: 0;
}
.links {
  display: flex;
  gap: 37px;
  padding: 17px 2px;
  color: #3a8fae;
}
```
